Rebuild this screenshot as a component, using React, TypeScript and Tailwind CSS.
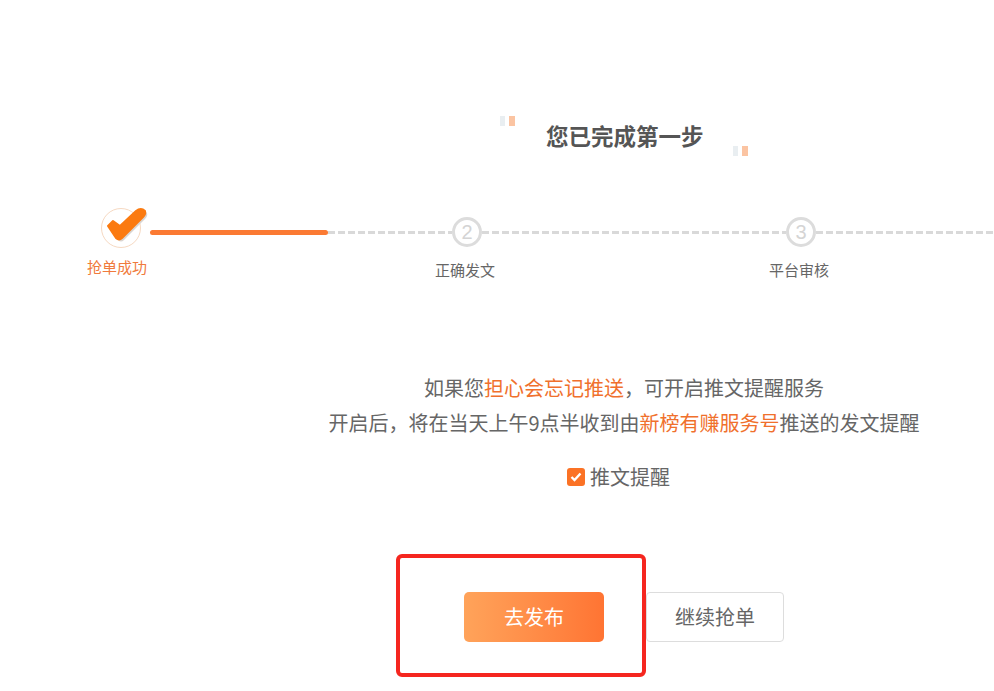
const font = "font-['Microsoft_YaHei','Noto_Sans_CJK_SC','Liberation_Sans',sans-serif]";

const dashed =
  "h-[3px] bg-[repeating-linear-gradient(90deg,#d9d9d9_0,#d9d9d9_7px,transparent_7px,transparent_10px)]";

const checkPath = "M8 16 L13 11 L20 16 L36 1 Q41 -3 45 1 Q46 4 43 7 L22 28 Q19 31 16 28 Z";

function DoneIcon() {
  return (
    <svg width="50" height="44" viewBox="0 0 50 44" className="shrink-0 overflow-visible">
      <circle cx="21" cy="18" r="19.5" fill="#fff" stroke="#f6d9c2" strokeWidth="1" />
      <path d={checkPath} transform="translate(2 2)" fill="#d9d5d2" />
      <path d={checkPath} fill="#fb7a10" stroke="#fb7a10" strokeWidth="2" strokeLinejoin="round" />
    </svg>
  );
}

function StepNumber({ n }: { n: number }) {
  return (
    <div className="w-[30px] h-[30px] shrink-0 rounded-full border-[3px] border-[#dcdcdc] flex items-center justify-center text-[20px] leading-none text-[#d4d4d4] font-['Liberation_Sans',sans-serif]">
      {n}
    </div>
  );
}

function Ticks({ className }: { className: string }) {
  return (
    <div className={`absolute flex gap-[4px] ${className}`}>
      <span className="w-[5px] h-[10px] bg-[#e9eef1]" />
      <span className="w-[6px] h-[10px] bg-[#fbc4a2]" />
    </div>
  );
}

export default function App() {
  return (
    <div className={`w-[994px] h-[691px] overflow-hidden bg-white ${font}`}>
      {/* タイトル */}
      <div className="pt-[119px] pl-[546px]">
        <div className="relative w-[158px]">
          <h1 className="text-[22.5px] leading-[32px] font-bold text-[#555] whitespace-nowrap">您已完成第一步</h1>
          <Ticks className="left-[-46px] top-[-3px]" />
          <Ticks className="left-[187px] top-[27px]" />
        </div>
      </div>

      {/* ステップ */}
      <div className="mt-[58px] flex items-center h-[46px] pl-[100px]">
        <DoneIcon />
        <div className="w-[178px] h-[5px] shrink-0 rounded-full bg-[#fb7a33]" />
        <div className={`w-[124px] shrink-0 ${dashed}`} />
        <StepNumber n={2} />
        <div className={`w-[304px] shrink-0 ${dashed}`} />
        <StepNumber n={3} />
        <div className={`flex-1 ${dashed}`} />
      </div>
      <div className="mt-[3px] flex pl-[87px] text-[15px] leading-[22px] whitespace-nowrap">
        <span className="w-[60px] text-[#f07a3c] -mt-[2px]">抢单成功</span>
        <span className="ml-[288px] w-[60px] text-[#666] mt-[1px]">正确发文</span>
        <span className="ml-[274px] w-[60px] text-[#666] mt-[1px]">平台审核</span>
      </div>

      {/* 説明 */}
      <div className="mt-[89px] pl-[254px] text-center text-[20px] leading-[35px] text-[#666] whitespace-nowrap">
        <p>
          如果您<span className="text-[#f0702c]">担心会忘记推送</span>，可开启推文提醒服务
        </p>
        <p>
          开启后，将在当天上午9点半收到由<span className="text-[#f0702c]">新榜有赚服务号</span>推送的发文提醒
        </p>
      </div>

      <label className="mt-[19px] ml-[567px] flex items-center gap-[5px] text-[20px] leading-[35px] text-[#666]">
        <span className="w-[18px] h-[18px] rounded-[3px] bg-[#fb7225] flex items-center justify-center">
          <svg width="12" height="10" viewBox="0 0 12 10">
            <path d="M1.5 5 L4.5 8 L10.5 1.5" fill="none" stroke="#fff" strokeWidth="2.4" />
          </svg>
        </span>
        推文提醒
      </label>

      {/* ボタン */}
      <div className="relative mt-[98px] ml-[464px] flex items-center gap-[42px] w-[320px]">
        <button className="w-[140px] h-[50px] rounded-[5px] text-[20px] text-white bg-gradient-to-r from-[#ffa35a] to-[#ff7433]">
          去发布
        </button>
        <button className="w-[138px] h-[50px] rounded-[4px] border border-[#dddddd] text-[20px] text-[#666] bg-white">
          继续抢单
        </button>
        {/* 赤枠の注釈 */}
        <div className="absolute left-[-68px] top-[-38px] w-[250px] h-[123px] rounded-[6px] border-[4px] border-[#f5261f] pointer-events-none" />
      </div>
    </div>
  );
}
